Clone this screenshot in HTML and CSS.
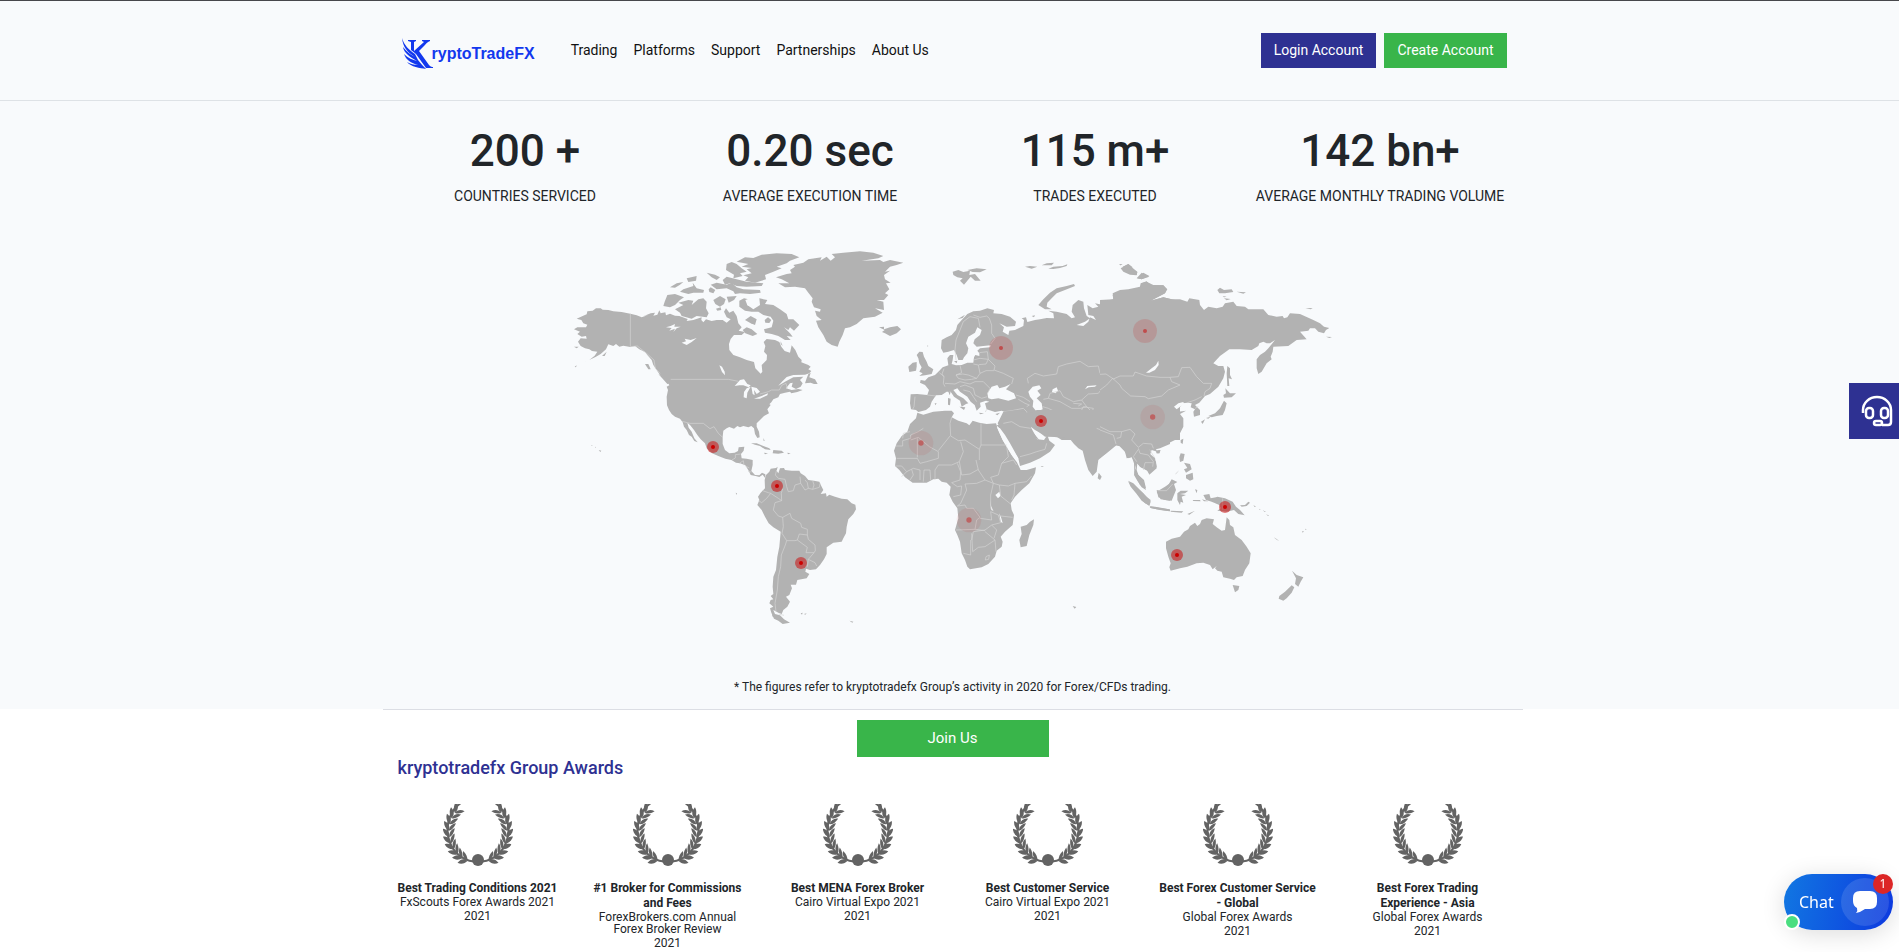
FILE: index.html
```html
<!DOCTYPE html>
<html lang="en">
<head>
<meta charset="utf-8">
<title>KryptoTradeFX</title>
<link rel="stylesheet" href="styles.css">
</head>
<body>
<svg class="defs" aria-hidden="true">
  <defs>
    <g id="leaf">
      <path d="M6 32C3 31 0 28 0 24C4 25 7 27 6 32Z"/>
      <path d="M6 32C9 31 11 28 12 24C8 25 6 28 6 32Z"/>
    </g>
    <g id="branch" transform="translate(0 -3) scale(1 1.1)">
      <path d="M19 1A29 29 0 0 0 31 55" fill="none" stroke="#636363" stroke-width="2"/>
      <use href="#leaf" transform="rotate(-62 34 28)"/>
      <use href="#leaf" transform="rotate(-50 34 28)"/>
      <use href="#leaf" transform="rotate(-38 34 28)"/>
      <use href="#leaf" transform="rotate(-26 34 28)"/>
      <use href="#leaf" transform="rotate(-14 34 28)"/>
      <use href="#leaf" transform="rotate(-2 34 28)"/>
      <use href="#leaf" transform="rotate(10 34 28)"/>
      <use href="#leaf" transform="rotate(22 34 28)"/>
      <use href="#leaf" transform="rotate(34 34 28)"/>
      <use href="#leaf" transform="rotate(46 34 28)"/>
    </g>
    <symbol id="wreath" viewBox="0 0 70 62">
      <g fill="#636363">
        <use href="#branch"/>
        <use href="#branch" transform="translate(70 0) scale(-1 1)"/>
        <circle cx="35" cy="56" r="6"/>
      </g>
    </symbol>
    <g id="pin">
      <circle r="18" fill="#cc0000" fill-opacity=".5"/>
      <circle r="6" fill="#cc0000"/>
    </g>
    <g id="pulse">
      <circle r="36" fill="#cc0000" fill-opacity=".14"/>
      <circle r="6" fill="#cc0000" fill-opacity=".5"/>
    </g>
    <g id="fade">
      <circle r="37" fill="#cc0000" fill-opacity=".07"/>
      <circle r="8" fill="#cc0000" fill-opacity=".4"/>
    </g>
  </defs>
</svg>

<header class="header">
  <div class="container header-row">
    <a class="logo" href="#" aria-label="KryptoTradeFX">
      <svg class="logo-mark" viewBox="0 0 34 31" aria-hidden="true">
        <path fill="#1238ee" d="M0 0C2 7 7 12 13 16C14 18 15 20 16 22C19 26 22 29 24 31C18 30 9 29 5 24C8 26 12 27 16 27C9 25 4 22 2 16C6 20 11 22 15 23C8 19 2 15 1 9C5 14 9 17 13 19C5 14 1 9 0 0Z"/>
        <path fill="#1238ee" d="M6 2H14V3L12 4V13L22 4L20 3V2H28V3C25 4 24 6 21 9L17 13L27 27C29 29 30 29 31 29V30H24L14 16L9 12V4L6 3Z"/>
      </svg>
      <span>ryptoTradeFX</span>
    </a>
    <nav class="nav">
      <a href="#">Trading</a>
      <a href="#">Platforms</a>
      <a href="#">Support</a>
      <a href="#">Partnerships</a>
      <a href="#">About Us</a>
    </nav>
    <div class="actions">
      <a class="btn btn-login" href="#">Login Account</a>
      <a class="btn btn-create" href="#">Create Account</a>
    </div>
  </div>
</header>

<main>
  <section class="figures">
    <div class="container">
      <div class="stats">
        <div><h2>200 +</h2><p>Countries serviced</p></div>
        <div><h2>0.20 sec</h2><p>Average execution time</p></div>
        <div><h2>115 m+</h2><p>Trades executed</p></div>
        <div><h2>142 bn+</h2><p>Average monthly trading volume</p></div>
      </div>
      <svg class="map" viewBox="-531 0 3420 1200" role="img" aria-label="World map of serviced countries">
        <!-- North America -->
        <g class="land">
          <path d="M68 228L80 223 82 214 98 212 108 205 122 205 128 209 145 210 160 214 185 216 211 221 230 226 245 232 265 225 250 229 272 220 285 218 280 227 292 224 298 211 302 220 316 217 318 226 330 221 345 227 358 228 383 237 380 243 400 240 425 232 424 240 430 247 438 238 455 243 470 240 488 240 500 248 512 238 500 232 492 215 498 205 508 218 520 212 530 228 535 250 545 262 536 272 555 276 545 285 522 285 512 297 507 312 508 330 520 345 540 352 560 360 582 366 586 385 602 401 607 395 605 375 620 360 621 345 612 335 616 318 611 306 620 297 645 300 658 306 664 320 674 333 690 338 695 316 706 330 715 350 725 360 724 367 745 375 752 380 745 388 754 393 748 400 735 404 700 405 680 411 668 423 655 437 675 425 700 412 730 410 720 420 728 430 722 440 708 447 695 440 698 428 690 430 678 445 695 450 715 447 728 450 712 456 694 460 690 455 675 458 660 462 655 472 640 478 634 487 620 500 628 492 632 495 622 508 627 520 612 528 600 540 590 550 590 560 597 575 599 592 592 594 585 582 582 565 574 558 565 562 550 558 540 562 532 558 522 566 508 561 500 565 490 572 488 590 488 612 495 630 508 640 524 638 534 633 536 622 553 620 551 632 543 642 545 655 560 656 578 660 578 675 574 693 585 705 598 706 606 698 616 703 616 715 608 704 598 711 590 709 572 705 566 692 556 676 540 670 528 668 514 660 496 656 475 648 456 640 440 625 435 610 422 598 412 585 402 570 390 555 382 548 386 563 395 575 403 595 413 607 403 603 395 590 387 585 380 570 372 560 368 547 360 536 345 530 335 522 327 510 321 496 320 470 324 450 320 440 328 436 322 425 312 415 300 405 290 390 280 375 275 360 262 345 255 336 238 328 225 318 211 321 190 317 178 320 168 312 160 318 145 313 138 328 122 342 108 350 80 364 62 372 88 360 104 347 112 335 96 333 88 328 75 325 62 318 54 305 62 295 80 296 78 288 65 290 52 282 60 275 42 268 52 262 78 262 82 254 70 250 64 240 50 236Z"/>
          <path d="M752 398L748 412 765 418 773 432 762 432 752 428 735 430 740 415 745 402Z"/>
          <path d="M255 372L265 372 272 388 265 388Z"/><path d="M295 402L312 412 330 430 322 432 308 416Z"/>
          <path d="M126 348L140 335 134 348Z"/><path d="M42 320L56 320 50 325Z"/><path d="M44 380L50 376 48 382Z"/>
          <path d="M322 165L345 162 372 172 360 180 345 195 330 202 310 198 314 185Z"/>
          <path d="M345 208L370 195 355 188 385 180 400 182 395 195 415 178 430 175 440 185 438 205 446 220 440 232 410 228 395 236 365 228 360 218Z"/>
          <path d="M330 142L350 130 370 126 360 134 345 143Z"/><path d="M370 148L400 138 398 128 410 145 432 150 430 158 400 158 385 162 360 155Z"/>
          <path d="M380 115L410 108 408 122 385 126Z"/><path d="M440 98L465 104 480 112 470 120 455 112Z"/>
          <path d="M446 148L452 142 466 150 460 160 448 156Z"/><path d="M460 180L480 168 497 178 492 192 480 200 466 192Z"/><path d="M468 206L482 202 484 210 472 212Z"/>
          <path d="M500 170L530 168 522 180 506 188Z"/><path d="M452 134L470 128 500 134 515 128 530 142 550 148 600 150 602 158 570 162 540 160 525 162 520 154 500 145 470 148Z"/>
          <path d="M488 120L500 110 530 118 560 125 610 130 605 138 560 140 530 138 510 130 495 134Z"/>
          <path d="M498 90L500 72 515 66 530 72 545 85 560 95 540 100 548 108 520 115 522 104Z"/>
          <path d="M530 65L555 52 580 54 605 44 650 40 695 42 718 52 690 62 680 70 650 80 665 85 640 95 615 105 618 118 585 128 555 122 565 112 550 106 575 100 560 88 575 84 545 80 565 72Z"/>
          <path d="M538 200L538 182 552 175 565 178 562 195 580 208 600 195 598 175 622 180 615 192 640 195 660 208 680 222 685 238 700 238 718 255 702 272 690 262 685 270 672 262 690 280 698 290 680 288 692 300 675 300 655 288 635 282 615 278 612 268 635 262 640 242 632 230 610 225 595 215 575 215 555 212Z"/>
          <path d="M555 240L572 228 590 238 585 255 572 250Z"/><path d="M548 270L560 262 575 268 592 282 578 288 556 280Z"/><path d="M614 240L624 232 634 240 628 249 616 248Z"/><path d="M662 304L668 318 662 312Z"/>
          <path d="M573 610L590 610 610 618 628 625 632 630 615 628 600 618 585 614Z"/><path d="M640 630L665 632 672 638 655 641 638 640Z"/><path d="M612 638L624 640 615 643Z"/><path d="M682 638L692 640 684 643Z"/><path d="M610 594L614 602 611 603Z"/>
          <path d="M116 630L124 632 121 636Z"/><path d="M94 615L98 617 95 618Z"/><path d="M105 620L108 622 105 623Z"/><path d="M527 758L531 760 530 765Z"/>
          <!-- Greenland and Iceland -->
          <path d="M648 112L680 102 695 100 690 90 705 80 700 75 730 68 745 58 785 52 780 62 800 50 812 62 825 52 815 42 850 38 900 34 940 38 970 48 955 55 905 62 960 60 970 66 990 60 1030 68 1010 75 990 80 975 95 990 92 972 105 975 118 992 128 978 130 988 148 975 160 985 165 972 180 950 180 970 185 972 210 945 205 968 218 945 230 910 235 890 252 870 262 855 265 848 285 838 305 833 320 815 315 800 305 790 285 775 262 768 242 785 240 770 228 765 212 780 215 782 208 762 202 755 185 758 175 745 158 735 145 705 140 675 142 655 130 688 130 665 118Z"/>
          <path d="M957 262L972 260 972 268 990 262 1012 258 1023 268 1010 280 990 288 975 280 966 276 974 270Z"/>
        </g>
        <g class="water">
          <path d="M318 262L332 258 345 252 343 260 362 260 350 265 340 276 345 266 328 272 335 264Z"/>
          <path d="M365 308L378 304 374 296 392 300 410 294 395 306 380 315Z"/>
          <path d="M478 376L486 380 494 395 495 406 486 396Z"/>
          <path d="M524 438L540 420 552 418 562 432 572 436 566 442 550 436 538 436Z"/><path d="M572 440L560 445 552 456 551 472 560 475 562 458Z"/><path d="M574 440L590 444 600 455 590 462 582 450 584 466 578 462Z"/><path d="M582 476L605 468 624 460 622 466 600 476Z"/>
          <path d="M556 180L570 175 566 192 576 202 562 196Z"/>
        </g>
        <g class="borders">
          <path d="M211 221V320L232 318 262 342 282 360 286 385 300 400"/><path d="M332 418H505L535 424M600 462L625 455 635 450 658 450 665 436 678 430 682 446"/>
          <path d="M366 544L390 550H430L450 566 462 560 475 580 488 592M516 660L526 654 526 644 542 642M538 670L550 662 552 676M568 684L556 678M574 696L564 694"/>
        </g>
        <!-- South America -->
        <g transform="translate(0 570)">
          <path class="land" d="M614 150L618 135 628 125 632 116 648 114 653 110 650 122 655 130 660 115 672 114 675 120 695 122 718 122 722 130 735 138 745 150 762 152 778 155 785 170 790 180 782 192 798 190 800 200 808 194 825 200 845 206 862 208 875 220 886 224 888 238 880 252 865 268 860 290 858 310 850 325 845 335 820 338 800 352 800 372 792 388 780 405 768 418 750 420 738 416 736 425 748 432 740 445 712 450 708 464 692 464 696 475 688 495 678 500 690 515 682 530 670 540 665 552 655 548 640 540 645 552 660 556 672 568 690 578 668 582 655 572 642 566 634 548 630 535 640 530 628 520 632 510 640 508 632 498 640 492 638 470 640 440 648 420 652 380 658 350 662 305 640 292 626 280 615 260 605 240 592 225 598 210 594 200 602 188 615 175Z"/>
          <path class="land" d="M722 550L728 548 726 554ZM732 552L740 550 736 554ZM868 572L880 575 877 578ZM636 552L646 562 638 560Z"/>
          <path class="borders" d="M650 120L646 135 655 145 675 148 680 170 685 185 700 182 705 165 722 160 720 140M722 160L735 180 745 175 742 158 735 150M745 175L758 178 762 165 758 152M758 178L778 172 780 160M608 182L625 188 632 190 620 205 605 218 596 212M632 190L655 205 665 212 664 190 668 176M665 212L645 218 640 240 655 258 668 262 690 250 695 265 722 280 725 292 742 298 742 315 718 312 712 330 705 332 680 332 676 345 664 375 662 410 655 440 652 480 645 520 648 545M668 262L670 290 666 310 680 332M742 315L745 328 765 345 766 362 762 368 738 368 742 352 712 330M762 368L745 388 742 410M745 388L765 398 770 408M656 552L672 556"/>
        </g>
        <!-- Europe and western Russia -->
        <g transform="translate(960 0)">
          <path class="land" d="M92 463L112 462 142 465 147 450 135 435 120 428 122 420 135 422 145 412 165 405 178 392 188 382 205 376 202 355 210 345 220 345 218 360 215 372 228 376 245 375 262 368 280 368 282 352 286 345 298 348 298 340 292 332 300 325 330 322 332 316 310 318 290 320 280 310 284 298 300 285 305 270 292 262 285 278 265 290 258 310 265 325 262 340 252 352 248 360 235 360 230 345 222 330 205 335 190 338 183 325 185 300 200 292 215 285 228 270 232 255 245 240 262 222 280 214 300 212 322 205 342 210 340 220 365 222 390 230 408 245 405 258 380 260 358 250 372 262 368 275 385 285 388 272 405 270 430 258 432 240 425 235 438 232 442 246 465 240 480 238 500 234 522 235 520 220 505 212 530 215 560 222 575 235 585 232 575 215 578 195 595 180 610 185 612 205 620 228 630 235 615 245 590 255 610 258 625 245 630 232 648 240 640 228 625 225 622 195 638 205 655 200 645 190 670 195 660 180 700 178 698 165 725 155 755 150 780 142 785 130 800 125 820 135 850 136 862 148 855 160 835 170 812 182 850 172 875 178 900 183V600H545L530 590 495 590 480 578 462 562 450 560 455 572 478 600H385L350 555 362 555 370 545 373 515 365 512 345 516 320 508 315 490 328 485 318 482 300 488 302 500 290 512 284 495 272 485 262 470 240 455 232 445 220 450 232 465 250 475 265 490 258 492 245 500 240 482 222 470 212 455 200 455 185 465 168 466 155 485 150 500 138 510 115 516 108 510 93 508 90 490Z"/>
          <path class="land" d="M110 345L118 335 128 336 132 350 140 365 145 378 160 388 155 402 135 406 118 408 128 400 118 395 125 382 118 370 115 355Z"/><path class="land" d="M98 368L110 366 110 380 108 392 88 396 85 380Z"/>
          <path class="land" d="M218 95L235 90 250 96 270 92 268 105 285 102 302 122 285 122 272 110 262 122 252 134 240 122 248 115 232 112 220 105ZM262 90L290 85 320 88 300 97 278 96Z"/>
          <path class="land" d="M475 195L490 178 510 158 530 145 560 138 582 132 585 138 555 150 530 160 515 175 502 188 500 200 515 208 495 208Z"/>
          <path class="land" d="M435 80L450 78 472 80 455 86ZM485 76L500 70 522 68 515 76ZM505 86L520 80 548 78 562 73 560 78 540 84 520 87ZM718 72L728 73 722 76ZM728 80L745 72 758 84 772 95 770 105 745 100 735 92ZM772 115L790 98 808 108 785 118ZM455 228L465 226 462 232ZM232 238L245 230 255 224 248 234ZM205 352L212 345 216 352 212 360ZM222 364L232 362 230 370ZM204 452L212 455 209 466ZM204 474L212 476 210 496 204 494ZM238 500L256 502 252 510ZM296 518L312 520 302 523ZM346 522L360 518 352 526ZM164 490L170 490 166 496ZM142 316L145 318 142 320ZM290 478L300 482 298 488Z"/>
          <path class="water" d="M325 475L322 460 335 440 352 435 358 445 375 440 392 432 378 448 402 460 408 475 385 482 355 475 335 478Z"/><path class="water" d="M445 455L458 440 478 436 484 445 472 452 482 465 470 475 485 490 488 508 470 515 458 500 460 482 450 470Z"/><path class="water" d="M518 448L530 442 534 452 526 460 516 456ZM615 448L622 438 650 436 645 440 626 442ZM798 398L815 385 828 375 835 362 836 375 825 390 808 398Z"/>
          <path class="borders" d="M228 360L225 330 228 300 240 270 250 245 270 230 295 235 300 262M300 232L320 228 328 235 335 255 335 280 345 295 332 312M280 225L300 232M178 398L192 410 190 430 195 440M142 465L168 468M105 470L102 500 98 508M192 386L186 402 192 410M228 405L248 402 265 405 290 415 300 400 295 375 280 372M240 376L245 398 228 405 235 415 255 420 275 418 290 415M195 430L225 432 240 425 270 432 285 425 310 425 330 445 322 462M240 440L255 435 280 445 285 465 305 475 322 470M250 450L270 455 280 470 290 485M280 360L300 355 325 358 345 378 342 390 370 400 400 415 395 432M296 374L318 372 325 358 322 335 298 338M300 400L318 392 342 392M408 465L430 472 450 485M415 478L435 490 448 495 440 500M445 430L442 415 465 400 490 408 530 402 535 380 560 372 600 364 625 380 655 378 660 400 698 415 670 440 655 460 625 462 605 480 580 485 550 470 540 452 510 460 505 475 490 478M698 415L725 410 765 395 800 402 840 415 880 412 900 405M700 420L725 450 755 468 805 470 830 475 860 465 900 445M488 500L505 505 535 520 538 550 545 570 555 590M505 475L540 485 575 505 602 505 620 500 605 480M538 545L570 545 600 520 610 500 640 505 635 520 600 555 590 585M580 490L605 492 595 498M316 516L320 508M373 515L395 512 430 505 440 515 445 540 455 558M395 512L400 525 375 545M430 540L450 562M620 500L640 520 655 535 660 560 700 575 745 580 762 572 765 600"/>
        </g>
        <!-- Africa, Arabia and India -->
        <g transform="translate(930 420)">
          <path class="land" d="M142 98L160 104 190 95 225 92 245 92 252 100 245 112 265 122 290 130 298 136 308 122 328 128 350 132 378 130 385 150 398 180 410 200 425 225 440 245 452 270 470 270 498 262 495 280 478 310 455 330 435 350 422 370 425 390 432 405 428 435 405 455 392 470 398 485 395 500 380 512 375 530 355 552 335 562 300 568 292 560 285 540 275 520 270 485 262 465 255 450 265 415 262 385 248 365 238 345 242 320 230 308 215 305 205 296 190 298 170 308 128 308 105 292 88 270 75 258 78 235 72 212 80 190 95 168 112 155 120 132 138 115Z"/>
          <path class="land" d="M492 418L490 435 478 465 470 498 452 502 448 480 455 462 452 440 470 435 480 425Z"/>
          <path class="land" d="M383 130L400 95 440 90 480 100 500 90 560 90H900V192L870 205 858 208 862 215 845 210 840 225 858 245 860 265 838 284 832 272 812 262 802 250 800 270 805 285 822 300 828 325 810 315 800 295 795 280 798 250 785 232 770 235 765 215 748 198 735 196 720 208 705 222 685 240 680 275 668 288 655 270 645 240 638 212 625 205 612 192 598 175 560 172 530 168 512 160 495 150 482 140 490 155 502 178 522 180 532 165 538 182 555 195 540 215 510 235 480 248 450 258 445 235 425 205 408 180 395 155Z"/>
          <path class="land" d="M686 278L695 290 690 300 683 295ZM775 305L800 322 820 340 842 365 838 378 815 362 800 342 782 320ZM838 380L870 384 900 388V394L860 388 842 384ZM860 335L885 320 900 310V362L872 358ZM858 212L870 210 868 220 860 220ZM512 258L522 259 516 261Z"/>
          <path class="water" d="M376 345L388 335 391 348 384 355ZM360 360L364 380 370 392 364 390ZM388 400L394 415 398 430 392 425ZM380 140L390 145 405 165 420 190 430 208 445 235 440 245 425 225 410 200 398 180 388 158Z"/>
          <path class="borders" d="M120 155L100 160 98 175M78 198H98V182L122 175V165L145 155 160 145M122 180L145 172 178 200 205 215V235L170 245 150 250 142 235H80M142 232V175M245 112L240 130 242 168 265 182 285 180 328 208V240M240 168L205 212M333 130V195L410 195M333 195L328 208M272 185L280 215 268 245 245 255 205 255 195 270M75 258L95 258 110 275 130 265 150 270 150 300M95 290L110 275M120 300L130 285 125 268M160 305L162 270 180 270 182 300M195 300L195 270M262 250L272 275 270 300 245 308 262 320 275 318 272 345 250 350M318 240L325 270 345 300 320 310 285 312 290 330 272 370 262 378M268 245L275 285 300 282 325 268M410 200L415 230 395 250 385 285 362 292 370 310 388 315 415 318 435 310 470 305 485 288M395 250L430 240 440 255M435 310L432 345 425 360M345 300L370 310 362 345 362 385 370 392M388 315L392 348 422 372M262 378L285 375 290 385 310 385 330 412 320 420 315 448 258 450M330 415L365 420 362 395 385 405 392 428 365 435 345 450 310 455 305 480M315 448L345 452M392 408L428 412M305 460L308 515 325 502 345 500 375 480 378 515M302 480V525L280 520M345 455L375 480M365 435L380 450 372 475M348 530L358 525 356 538 346 540ZM450 230L480 222 500 215 525 208 530 190M500 175L505 180M400 130L425 125 450 140 482 145M735 155L730 165 740 195M680 145L735 165 735 150 780 148 785 165 765 190 770 215M785 165L805 190 790 210 798 245M800 195L830 195 855 235M790 212L815 215 835 240 850 245M820 265L835 245"/>
        </g>
        <!-- Eastern Asia -->
        <g transform="translate(1620 0)">
          <path class="land" d="M0 180L20 182 40 178 38 160 60 150 85 148 120 140 122 130 140 124 150 135 190 136 200 148 195 160 175 170 152 182 190 172 215 178 240 178 262 185 268 175 298 180 300 195 312 210 325 200 350 205 368 200 375 190 400 185 410 198 435 200 445 208 490 208 505 225 530 230 548 228 552 235 562 232 570 220 600 222 640 240 660 250 672 260 688 264 678 270 672 280 655 275 645 265 630 265 625 272 600 275 620 298 590 300 565 318 520 320 518 335 512 350 515 358 500 370 485 395 475 402 470 385 470 358 480 345 495 335 505 325 525 300 510 310 500 310 490 305 478 310 475 318 455 330 420 328 388 328 360 348 340 370 355 378 370 378 375 395 370 415 355 440 330 462 315 468 298 488 285 495 300 510 300 525 282 530 280 515 285 508 272 502 275 490 262 488 248 490 238 505 235 515 258 512 240 522 250 535 250 560 240 580 225 600 205 610 180 615 165 620 160 628 150 622 148 640 165 655 170 680 148 700 140 690 120 680 110 668 105 685 115 705 125 720H118L103 700 102 670 95 650 85 655 75 635 65 620 50 615 20 640 0 655Z"/>
          <path class="land" d="M352 150L360 143 372 150 395 148 400 156 375 160 358 160ZM410 155L438 157 430 161ZM372 175L392 177 380 181ZM368 168L380 170 372 172ZM616 205L638 204 632 208ZM678 290L696 291 688 294ZM382 378L390 385 390 405 396 418 386 415 388 438 382 438 380 400ZM376 445L390 460 408 460 395 472 372 473 370 465 378 460ZM372 482L380 490 375 510 368 525 350 528 335 532 325 528 345 520 360 505 365 495ZM303 545L315 538 308 552ZM318 534L332 530 325 536ZM242 600L250 596 248 612 242 608ZM170 632L182 630 178 640 170 640ZM62 85L85 72 98 82 88 86 112 96 110 106 90 104 70 95ZM110 115L125 98 148 110 125 118ZM58 73L66 74 60 76Z"/>
          <path class="water" d="M138 398L155 385 168 375 175 362 176 375 165 390 148 398ZM222 500L235 490 250 486 252 492 240 500 230 508Z"/>
          <path class="borders" d="M0 403L18 402 40 417 60 408 100 408 105 396 140 408 180 412 210 412 235 410 245 383 270 382 290 410 310 430 335 430 330 445 315 455 312 468M210 412L215 425 240 435 205 450 185 468 145 476 135 470 92 468 65 445 60 435 38 415 20 435 0 450M262 488L285 480 305 470M285 505L295 500M0 560L30 575 65 575 62 592 50 595M65 575L90 568 105 582 95 600 115 622M115 622L130 610 155 612 160 625M115 625L120 640 145 645 160 665 158 680M115 628L100 650 110 665M130 690L135 668 158 668M0 570L40 585 48 612"/>
        </g>
        <!-- South-east Asia and Oceania -->
        <g transform="translate(1620 600)">
          <path class="land" d="M198 305L215 296 240 290 252 275 265 268 270 258 285 248 292 258 300 252 305 240 320 235 342 238 338 252 350 262 365 272 375 270 380 232 388 240 390 255 400 262 405 285 425 300 440 320 452 340 448 370 435 390 428 408 410 412 402 420 390 416 370 412 365 395 352 392 345 385 350 378 338 388 330 375 310 368 290 370 262 380 240 385 212 392 208 382 212 370 205 350 198 325Z"/>
          <path class="land" d="M398 435L418 438 415 450 405 457ZM576 392L590 405 610 412 602 425 595 440 585 432 588 415ZM575 436L583 442 575 458 560 475 550 482 536 476 538 468 555 455ZM521 292L530 297 538 304 528 298ZM606 274L612 274 608 278ZM616 266L620 268 616 270Z"/>
          <path class="land" d="M84 122L100 130 120 150 140 170 152 180 148 195 135 190 118 168 100 145ZM104 92L115 105 130 120 138 150 125 142 112 122 102 105ZM150 198L175 202 205 208 208 214 180 210 152 204ZM212 212L250 214 245 218 212 215ZM170 150L190 150 205 135 215 118 232 126 222 132 228 150 215 182 195 180 175 172ZM232 160L242 152 265 152 255 160 240 162 258 165 245 170 250 188 242 185 240 195 232 180ZM285 148L292 150 290 160ZM278 180L300 180 302 184 280 183ZM262 222L285 212 268 224ZM310 165L328 162 332 175 348 172 352 170 375 175 398 185 408 200 420 210 434 226 415 222 402 210 380 215 352 212 362 205 358 195 335 185 318 180ZM420 196L435 195 445 185 450 188 440 198 425 200ZM460 195L468 200 464 201ZM478 206L482 210 478 209ZM488 210L498 216 494 216ZM498 222L508 228 504 228ZM242 40L254 42 250 62 240 66 238 52ZM252 68L270 72 275 88 258 98 252 88 262 84ZM258 105L278 98 280 118 270 122 258 115ZM224 104L238 90 230 100ZM306 178L325 184 312 184Z"/>
          <path class="borders" d="M368 175V210M172 152L200 152 218 132"/>
        </g>
        <path class="land" d="M1538 1098L1549 1101 1544 1106Z"/>
        <use href="#pin" x="459" y="621"/><use href="#pin" x="651" y="738"/><use href="#pin" x="723" y="969"/>
        <use href="#pin" x="1443" y="543"/><use href="#pin" x="1995" y="801"/><use href="#pin" x="1851" y="945"/>
        <use href="#pulse" x="1323" y="324"/><use href="#pulse" x="1755" y="273"/>
        <use href="#fade" x="1778" y="531"/><use href="#fade" x="1083" y="609"/><use href="#fade" x="1227" y="840"/>
      </svg>
      <p class="note">* The figures refer to kryptotradefx Group’s activity in 2020 for Forex/CFDs trading.</p>
    </div>
  </section>

  <section class="awards">
    <div class="container awards-body">
      <a class="btn btn-join" href="#">Join Us</a>
      <h3>kryptotradefx Group Awards</h3>
      <div class="award-list">
        <article><svg class="wreath"><use href="#wreath"/></svg><h4>Best Trading Conditions 2021</h4><p>FxScouts Forex Awards 2021</p><time>2021</time></article>
        <article><svg class="wreath"><use href="#wreath"/></svg><h4>#1 Broker for Commissions and Fees</h4><p>ForexBrokers.com Annual Forex Broker Review</p><time>2021</time></article>
        <article><svg class="wreath"><use href="#wreath"/></svg><h4>Best MENA Forex Broker</h4><p>Cairo Virtual Expo 2021</p><time>2021</time></article>
        <article><svg class="wreath"><use href="#wreath"/></svg><h4>Best Customer Service</h4><p>Cairo Virtual Expo 2021</p><time>2021</time></article>
        <article><svg class="wreath"><use href="#wreath"/></svg><h4>Best Forex Customer Service - Global</h4><p>Global Forex Awards</p><time>2021</time></article>
        <article><svg class="wreath"><use href="#wreath"/></svg><h4>Best Forex Trading Experience - Asia</h4><p>Global Forex Awards</p><time>2021</time></article>
      </div>
    </div>
  </section>
</main>

<button class="support" type="button" aria-label="Contact support">
  <svg viewBox="0 0 32 32" fill="none" stroke="#fff" stroke-width="2.5" aria-hidden="true">
    <path d="M2 18V15A14 13 0 0 1 30 15V27Q30 30 27 30H21"/>
    <rect x="5" y="13" width="7" height="10" rx="3"/>
    <rect x="20" y="13" width="7" height="10" rx="3"/>
    <rect x="13" y="26" width="8" height="4" rx="2"/>
  </svg>
</button>
<button class="chat" type="button">
  <span>Chat</span>
  <span class="chat-icon">
    <svg viewBox="0 0 24 22" aria-hidden="true"><path fill="#fff" d="M7 0H17Q24 0 24 7V11Q24 18 17 18H12Q8 21 3 22Q5 20 4 17Q0 15 0 10V7Q0 0 7 0Z"/></svg>
  </span>
  <span class="chat-count">1</span>
  <span class="chat-online"></span>
</button>
</body>
</html>
```
FILE: styles.css
```css
* { box-sizing: border-box; }
body {
  margin: 0;
  color: #212529;
  background: #fff;
  font-family: Roboto, "Liberation Sans", sans-serif;
  font-size: 14px;
  line-height: 21px;
  overflow-x: hidden;
}
h2, h3, h4, p { margin: 0; }
a { color: inherit; text-decoration: none; }
.defs { position: absolute; width: 0; height: 0; }

.header, .figures, .awards { padding-left: 6px; }
.container { max-width: 1140px; margin: 0 auto; }

.header {
  background: #f8fafc;
  border-top: 1px solid #47474b;
  border-bottom: 1px solid #dee2e6;
}
.header-row { display: flex; align-items: center; padding: 31px 16px; }
.logo {
  display: flex;
  align-items: center;
  padding: 6px 0 0 3px;
  margin-right: 36px;
  color: #1238ee;
  font: bold 16px/20px "Liberation Sans", Arial, sans-serif;
}
.logo-mark { width: 34px; height: 31px; margin-right: -4px; }
.nav { display: flex; gap: 16px; color: #111; }
.actions { display: flex; gap: 8px; margin-left: auto; }
.btn { display: block; padding: 7px 13px; color: #fff; text-align: center; }
.btn-login { background: #2e3192; }
.btn-create { background: #39b54a; }

.figures { background: #f8fafc; }
.stats { display: grid; grid-template-columns: repeat(4, 1fr); padding-top: 21px; text-align: center; }
.stats h2 { font-size: 44px; font-weight: 500; line-height: 58px; }
.stats p { margin-top: 6px; text-transform: uppercase; }
.map { display: block; width: 100%; height: auto; margin-top: 33px; }
.land { fill: #b2b2b2; }
.water { fill: #f8fafc; }
.borders { fill: none; stroke: #d4d4d4; stroke-width: 2; }
.note { padding: 37px 0 12px; text-align: center; font-size: 12px; line-height: 20px; }

.awards-body { border-top: 1px solid #dcdee4; padding: 10px 0 5px; }
.btn-join { width: 192px; margin: 0 auto; padding: 8px; background: #39b54a; font-size: 15px; }
.awards h3 { padding: 0 15px; color: #2e3192; font-size: 18px; font-weight: 500; line-height: 22px; }
.award-list { display: grid; grid-template-columns: repeat(6, 1fr); padding-top: 25px; }
.award-list article { padding: 0 15px; text-align: center; font-size: 12px; line-height: 15px; }
.wreath { display: block; width: 70px; height: 62px; margin: 0 auto 15px; }
.award-list h4 { font-size: 12px; font-weight: 700; line-height: 15px; }
.award-list p { margin-bottom: 1px; line-height: 12px; }
.award-list time { display: block; }

button { border: 0; padding: 0; cursor: pointer; }
.support {
  position: fixed;
  top: 383px;
  right: 0;
  display: flex;
  align-items: center;
  justify-content: center;
  width: 50px;
  height: 56px;
  padding-left: 6px;
  background: #2e3192;
}
.support svg { width: 32px; height: 32px; }
.chat {
  position: fixed;
  right: 6px;
  bottom: 22px;
  display: flex;
  align-items: center;
  justify-content: space-between;
  width: 109px;
  height: 56px;
  padding: 0 4px 0 15px;
  border-radius: 28px;
  color: #fff;
  background: linear-gradient(100deg, #1177e2, #0d39df);
  box-shadow: 0 4px 24px rgba(0, 0, 0, .14);
  font: 16px/24px "Noto Sans", sans-serif;
}
.chat-icon {
  display: flex;
  align-items: center;
  justify-content: center;
  width: 48px;
  height: 48px;
  border-radius: 50%;
  background: rgba(255, 255, 255, .12);
}
.chat-icon svg { width: 24px; height: 22px; }
.chat-count {
  position: absolute;
  top: 0;
  right: 0;
  width: 20px;
  height: 20px;
  border-radius: 50%;
  background: #dc2626;
  font-size: 12px;
  line-height: 20px;
}
.chat-online {
  position: absolute;
  bottom: 0;
  left: 0;
  width: 16px;
  height: 16px;
  border: 2px solid #fff;
  border-radius: 50%;
  background: #4ade80;
}
```
